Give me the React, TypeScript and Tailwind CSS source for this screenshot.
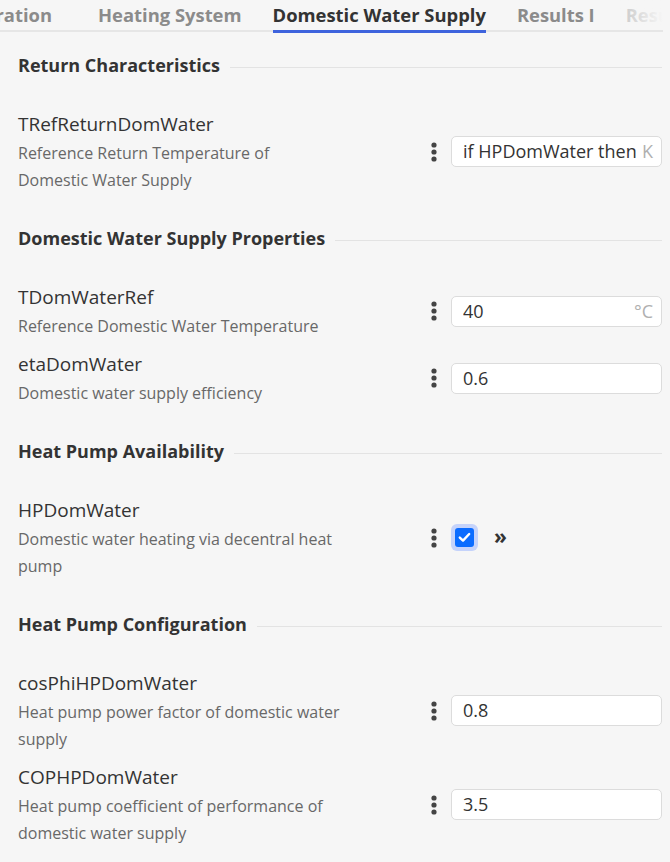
import { Fragment } from "react";

type Param = {
  name: string;
  desc: string;
  value?: string;
  unit?: string;
  checkbox?: boolean;
};

type Section = { title: string; params: Param[] };

const sections: Section[] = [
  {
    title: "Return Characteristics",
    params: [
      {
        name: "TRefReturnDomWater",
        desc: "Reference Return Temperature of\nDomestic Water Supply",
        value: "if HPDomWater then 308.15 else 283.15",
        unit: "K",
      },
    ],
  },
  {
    title: "Domestic Water Supply Properties",
    params: [
      {
        name: "TDomWaterRef",
        desc: "Reference Domestic Water Temperature",
        value: "40",
        unit: "°C",
      },
      { name: "etaDomWater", desc: "Domestic water supply efficiency", value: "0.6" },
    ],
  },
  {
    title: "Heat Pump Availability",
    params: [
      {
        name: "HPDomWater",
        desc: "Domestic water heating via decentral heat pump",
        checkbox: true,
      },
    ],
  },
  {
    title: "Heat Pump Configuration",
    params: [
      { name: "cosPhiHPDomWater", desc: "Heat pump power factor of domestic water supply", value: "0.8" },
      {
        name: "COPHPDomWater",
        desc: "Heat pump coefficient of performance of domestic water supply",
        value: "3.5",
      },
    ],
  },
];

const tabs = ["Heating System", "Domestic Water Supply", "Results I", "Results II"];
const activeTab = "Domestic Water Supply";

function Kebab() {
  return (
    <svg width="8" height="22" viewBox="0 0 8 22" className="shrink-0 text-[#444]">
      <circle cx="4" cy="4" r="2.6" fill="currentColor" />
      <circle cx="4" cy="11" r="2.6" fill="currentColor" />
      <circle cx="4" cy="18" r="2.6" fill="currentColor" />
    </svg>
  );
}

function ParamRow({ p }: { p: Param }) {
  return (
    <div className="flex items-center">
      <div className="w-[330px] shrink-0">
        <div className="text-[19px] leading-[31px] text-[#333]">{p.name}</div>
        <div className="whitespace-pre-line text-[16px] leading-[27px] text-[#686868]">{p.desc}</div>
      </div>
      <div className="ml-auto flex items-center">
        <Kebab />
        {p.checkbox ? (
          <div className="ml-[13px] flex w-[211px] items-center">
            <div className="flex h-[27px] w-[27px] items-center justify-center rounded-[6px] bg-[#c5d3fb]">
              <div className="flex h-[19px] w-[19px] items-center justify-center rounded-[3px] bg-[#0b6cff]">
                <svg width="13" height="11" viewBox="0 0 13 11">
                  <path d="M1.8 5.6 L5 8.6 L11.2 2" fill="none" stroke="white" strokeWidth="2.4" strokeLinecap="round" strokeLinejoin="round" />
                </svg>
              </div>
            </div>
            <span className="ml-[16px] pb-[3px] text-[21px] font-bold leading-none text-[#333]">»</span>
          </div>
        ) : (
          <div className="ml-[13px] flex h-[31px] w-[211px] items-center rounded-[5px] border border-[#dcdcdc] bg-white pl-[11px] pr-[8px]">
            <span className="min-w-0 flex-1 overflow-hidden whitespace-nowrap text-[18px] text-[#333]">{p.value}</span>
            {p.unit && <span className="ml-[4px] text-[18px] text-[#b0b0b0]">{p.unit}</span>}
          </div>
        )}
      </div>
    </div>
  );
}

export default function App() {
  return (
    <div className="h-[862px] w-[670px] overflow-hidden bg-[#f6f6f6] font-['Open_Sans',sans-serif]">
      {/* tab strip, scrolled so the active tab sits mid-view */}
      <div className="relative mr-[7px] h-[33px] overflow-hidden">
        <div className="absolute inset-x-0 top-[30px] h-[2px] bg-[#e6e6e6]" />
        <div className="flex h-[33px] whitespace-nowrap text-[18.4px] font-bold">
          <div className="flex h-full w-[52px] shrink-0 items-center justify-end overflow-hidden pb-[3px] text-[#8b8b8b]">
            Configuration
          </div>
          <div className="ml-[46px] flex h-full gap-[31px]">
            {tabs.map((t) => (
              <div
                key={t}
                className={`relative flex h-full items-center pb-[3px] ${
                  t === activeTab ? "text-[#333]" : "text-[#8b8b8b]"
                }`}
              >
                {t}
                {t === activeTab && <div className="absolute inset-x-0 bottom-0 h-[3px] bg-[#3e63dd]" />}
              </div>
            ))}
          </div>
        </div>
        <div className="absolute right-0 top-0 h-[30px] w-[50px] bg-gradient-to-r from-[#f6f6f6]/50 to-[#f6f6f6]" />
      </div>

      <div className="pl-[18px] pr-[8px] pt-[18px]">
        {sections.map((s, i) => (
          <Fragment key={s.title}>
            <div className={`flex h-[28px] items-center ${i > 0 ? "mt-[30px]" : ""}`}>
              <span className="text-[18px] font-bold text-[#333]">{s.title}</span>
              <div className="ml-[10px] mt-[4px] h-px flex-1 bg-[#e3e3e3]" />
            </div>
            <div className="mt-[30px] flex flex-col gap-[9px]">
              {s.params.map((p) => (
                <ParamRow key={p.name} p={p} />
              ))}
            </div>
          </Fragment>
        ))}
      </div>
    </div>
  );
}
